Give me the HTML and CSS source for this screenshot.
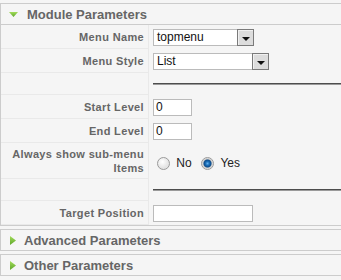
FILE: index.html
```html
<!DOCTYPE html>
<html lang="en">
<head>
    <meta charset="UTF-8">
    <title>Module Parameters</title>
    <link rel="stylesheet" href="styles.css">
</head>
<body>
    <div class="panel">
        <h3 class="panel-title open">
            <svg class="arrow-down" width="9" height="5" viewBox="0 0 9 5"><polygon points="0,0 9,0 4.5,5" fill="url(#g1)"/><defs><linearGradient id="g1" x1="0" y1="0" x2="0" y2="1"><stop offset="0" stop-color="#a3dc5a"/><stop offset="1" stop-color="#5ea62a"/></linearGradient></defs></svg>
            <span>Module Parameters</span>
        </h3>
        <table class="paramlist">
            <tr class="row">
                <td class="key">Menu Name</td>
                <td class="value">
                    <span class="select">
                        <span class="select-text short">topmenu</span>
                        <span class="select-btn"><i></i></span>
                    </span>
                </td>
            </tr>
            <tr class="row">
                <td class="key">Menu Style</td>
                <td class="value">
                    <span class="select">
                        <span class="select-text long">List</span>
                        <span class="select-btn"><i></i></span>
                    </span>
                </td>
            </tr>
            <tr class="row sep">
                <td class="key"></td>
                <td class="value"><hr></td>
            </tr>
            <tr class="row">
                <td class="key">Start Level</td>
                <td class="value"><input type="text" class="text-input small" value="0"></td>
            </tr>
            <tr class="row">
                <td class="key">End Level</td>
                <td class="value"><input type="text" class="text-input small" value="0"></td>
            </tr>
            <tr class="row tall">
                <td class="key">Always show sub-menu Items</td>
                <td class="value radios">
                    <input type="radio" name="expand" id="expand0" class="radio">
                    <label for="expand0" class="radio-label">No</label>
                    <input type="radio" name="expand" id="expand1" class="radio" checked>
                    <label for="expand1" class="radio-label">Yes</label>
                </td>
            </tr>
            <tr class="row sep">
                <td class="key"></td>
                <td class="value"><hr></td>
            </tr>
            <tr class="row">
                <td class="key">Target Position</td>
                <td class="value"><input type="text" class="text-input wide" value=""></td>
            </tr>
        </table>
    </div>

    <div class="panel">
        <h3 class="panel-title">
            <svg class="arrow-right" width="6" height="9" viewBox="0 0 6 9"><polygon points="0,0 6,4.5 0,9" fill="url(#g2)"/><defs><linearGradient id="g2" x1="0" y1="0" x2="0" y2="1"><stop offset="0" stop-color="#a3dc5a"/><stop offset="1" stop-color="#5ea62a"/></linearGradient></defs></svg>
            <span>Advanced Parameters</span>
        </h3>
    </div>

    <div class="panel">
        <h3 class="panel-title">
            <svg class="arrow-right" width="6" height="9" viewBox="0 0 6 9"><polygon points="0,0 6,4.5 0,9" fill="url(#g3)"/><defs><linearGradient id="g3" x1="0" y1="0" x2="0" y2="1"><stop offset="0" stop-color="#a3dc5a"/><stop offset="1" stop-color="#5ea62a"/></linearGradient></defs></svg>
            <span>Other Parameters</span>
        </h3>
    </div>
</body>
</html>
```

FILE: styles.css
```css
body {
    margin: 0;
    padding-top: 3px;
    overflow: hidden;
    background: #f5f5f5;
    font-family: 'Liberation Sans', Arial, sans-serif;
    color: #666;
}

.panel {
    width: 380px;
    border: 1px solid #ccc;
    margin-bottom: 3px;
    background: #f5f5f5;
}

.panel-title {
    display: flex;
    align-items: center;
    height: 20px;
    margin: 0;
    padding-left: 9px;
    font-size: 13px;
    font-weight: bold;
    color: #666;
}

.panel-title.open {
    padding-left: 8px;
    border-bottom: 1px solid #ccc;
}

.arrow-down {
    margin-right: 9px;
}

.arrow-right {
    margin-right: 8px;
}

.paramlist {
    width: 100%;
    border-collapse: separate;
    border-spacing: 0;
}

.row td {
    height: 23px;
    padding-top: 0;
    padding-bottom: 0;
}

.row.sep td {
    height: 21px;
}

.row.tall td {
    height: 35px;
}

.key {
    width: 143px;
    padding: 0 4px 0 0;
    border-bottom: 1px solid #e9e9e9;
    border-right: 1px solid #e9e9e9;
    text-align: right;
    font-size: 11px;
    line-height: 14px;
    letter-spacing: 0.35px;
    font-weight: bold;
    color: #666;
}

.value {
    padding-left: 4px;
    font-size: 12px;
    color: #222;
}

.row.tall td.radios {
    height: 31px;
    padding-top: 4px;
}

/* fake dropdown */
.select {
    display: inline-flex;
    height: 17px;
    vertical-align: middle;
}

.select-text {
    box-sizing: border-box;
    height: 17px;
    padding-left: 3px;
    border: 1px solid #bbb;
    border-right: 0;
    background: #fff;
    font-size: 12px;
    line-height: 15px;
    color: #111;
}

.select-text.short { width: 84px; }
.select-text.long { width: 99px; }

.select-btn {
    box-sizing: border-box;
    width: 17px;
    height: 17px;
    border: 1px solid #7a7a7a;
    background: #dcdcdc;
    box-shadow: inset 1px 1px 0 #f0f0f0;
    display: flex;
    align-items: flex-end;
    justify-content: center;
    padding-bottom: 4px;
}

.select-btn i {
    width: 0;
    height: 0;
    border-left: 4px solid transparent;
    border-right: 4px solid transparent;
    border-top: 4px solid #111;
}

.text-input {
    box-sizing: border-box;
    height: 17px;
    margin: 0;
    padding: 0 2px;
    border: 1px solid #bbb;
    background: #fff;
    font-family: 'Liberation Sans', Arial, sans-serif;
    font-size: 12px;
    color: #111;
    vertical-align: middle;
}

.text-input.small { width: 39px; }
.text-input.wide { width: 100px; }

.radio {
    appearance: none;
    -webkit-appearance: none;
    width: 13px;
    height: 13px;
    margin: 0 3px 0 4px;
    border: 1px solid #9a9a9a;
    border-radius: 50%;
    background: radial-gradient(circle at 40% 35%, #fff 0, #e4e4e4 6px);
    vertical-align: middle;
}

.radio:checked {
    background: radial-gradient(circle at 50% 50%, #5fb0ee 0, #1b6cb5 2px, #0d4d8c 3.5px, #c8c8c8 4.5px, #f2f2f2 6px);
}

.radio-label {
    margin-right: 2px;
    vertical-align: middle;
}

hr {
    margin: 0;
    height: 0;
    border: 0;
    border-top: 1px solid #4d4d4d;
    border-bottom: 1px solid #9a9a9a;
}
```
